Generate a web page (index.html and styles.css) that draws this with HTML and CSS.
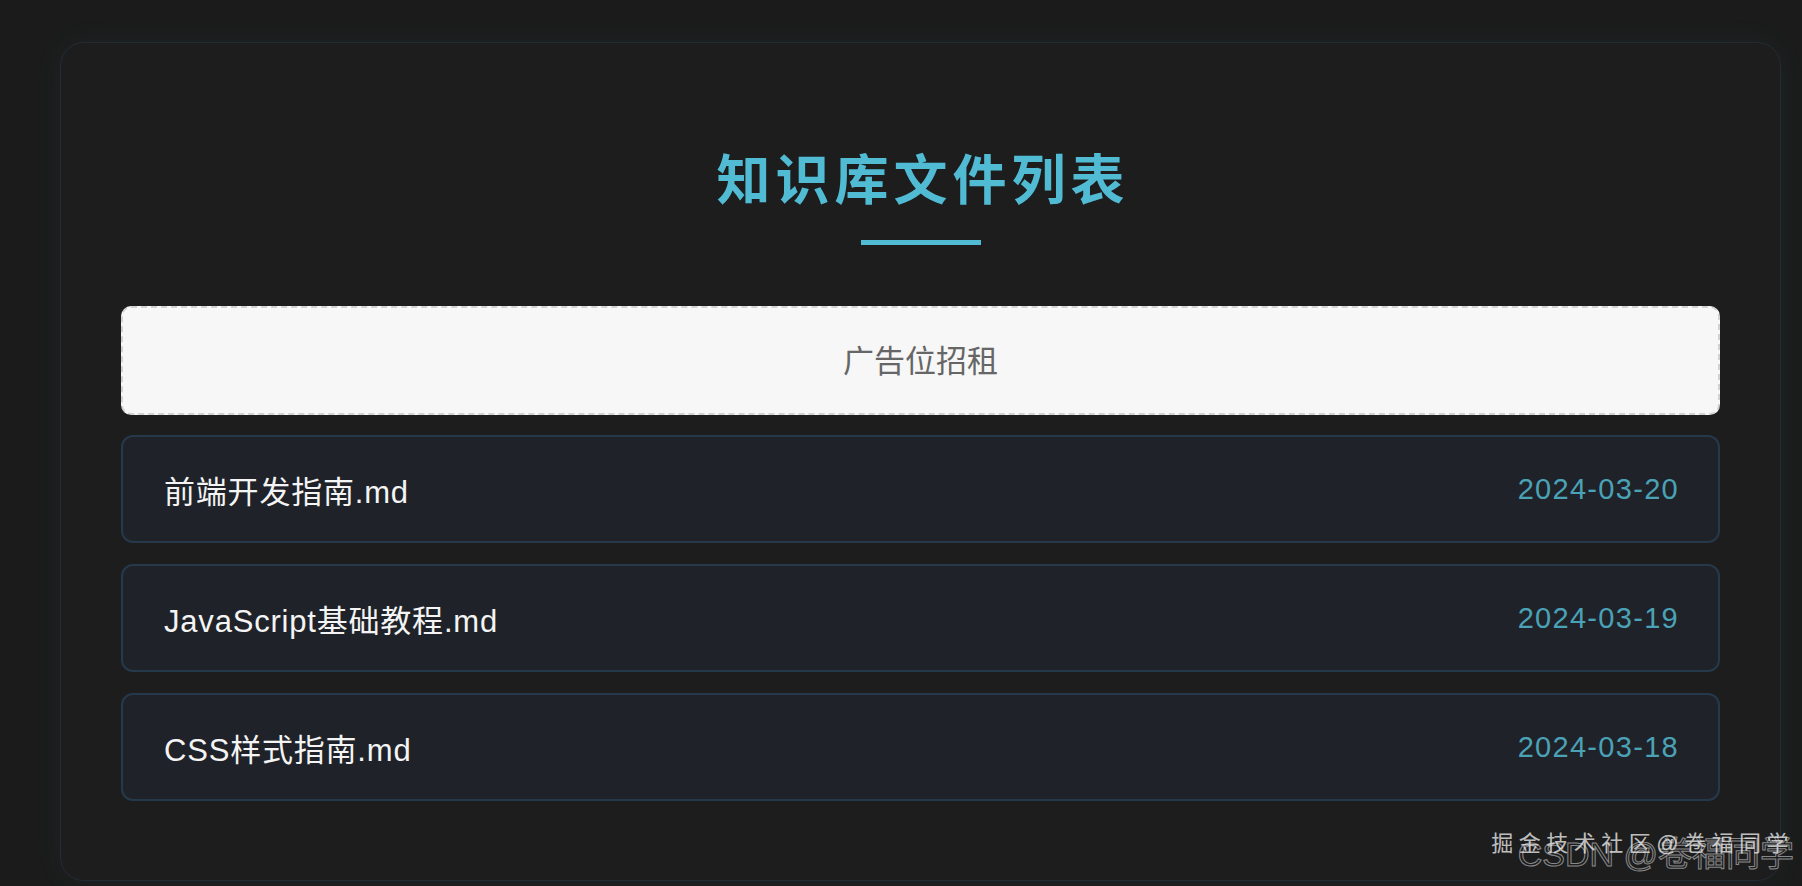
FILE: index.html
```html
<!DOCTYPE html>
<html lang="zh-CN">
<head>
<meta charset="utf-8">
<title>知识库文件列表</title>
<link rel="stylesheet" href="styles.css">
</head>
<body>
  <div class="container">
    <h1 class="title">知识库文件列表</h1>
    <div class="title-bar"></div>
    <div class="ad">广告位招租</div>
    <ul class="file-list">
      <li class="file-item"><span class="file-name">前端开发指南.md</span><span class="file-date">2024-03-20</span></li>
      <li class="file-item"><span class="file-name">JavaScript基础教程.md</span><span class="file-date">2024-03-19</span></li>
      <li class="file-item"><span class="file-name">CSS样式指南.md</span><span class="file-date">2024-03-18</span></li>
    </ul>
  </div>
  <div class="wm wm-csdn">CSDN @卷福同学</div>
  <div class="wm wm-juejin">掘金技术社区@卷福同学</div>
</body>
</html>
```
FILE: styles.css
```css
html, body {
  margin: 0;
  padding: 0;
  height: 100%;
}
body {
  background: #1b1b1b;
  font-family: "Liberation Sans", "Noto Sans CJK SC", sans-serif;
  padding: 42px 21px 0 60px;
  box-sizing: border-box;
  overflow: hidden;
  position: relative;
}
.container {
  background: #1d1d1e;
  border: 1px solid #232b34;
  border-radius: 24px;
  padding: 102px 60px 79px;
  box-shadow: 0 0 30px rgba(79, 184, 208, 0.06);
  display: flex;
  flex-direction: column;
  align-items: stretch;
}
.title {
  margin: 0;
  text-align: center;
  font-family: "Noto Sans CJK SC", sans-serif;
  font-weight: 700;
  font-size: 54px;
  line-height: 64px;
  letter-spacing: 5px;
  color: #50bbd3;
  padding-left: 5px;
}
.title-bar {
  align-self: center;
  width: 120px;
  height: 5px;
  background: #50bbd3;
  margin-top: 31px;
}
.ad {
  margin-top: 61px;
  height: 105px;
  background: #f7f7f7;
  border: 2px dashed #d2d2d2;
  border-radius: 10px;
  display: flex;
  align-items: center;
  justify-content: center;
  color: #666666;
  font-size: 31px;
  padding-bottom: 4px;
  box-sizing: border-box;
  height: 109px;
}
.file-list {
  list-style: none;
  margin: 20px 0 0;
  padding: 0;
  display: flex;
  flex-direction: column;
  gap: 21px;
}
.file-item {
  height: 104px;
  background: #1f2329;
  border: 2px solid #25394b;
  border-radius: 12px;
  padding: 0 40px 0 41px;
  display: flex;
  align-items: center;
  justify-content: space-between;
}
.file-name {
  color: #f4f4f4;
  font-size: 31px;
  letter-spacing: 0.8px;
}
.file-date {
  color: #4ba2b7;
  font-size: 29px;
  letter-spacing: 1.3px;
  margin-right: -1px;
}
.wm {
  position: absolute;
  white-space: nowrap;
}
.wm-juejin {
  right: 8px;
  top: 826px;
  font-size: 22px;
  line-height: 36px;
  letter-spacing: 5.5px;
  color: rgba(235, 235, 235, 0.8);
}
.wm-csdn {
  right: 8px;
  top: 834px;
  font-size: 34px;
  line-height: 40px;
  color: transparent;
  -webkit-text-stroke: 1px rgba(230, 230, 230, 0.55);
}
```
